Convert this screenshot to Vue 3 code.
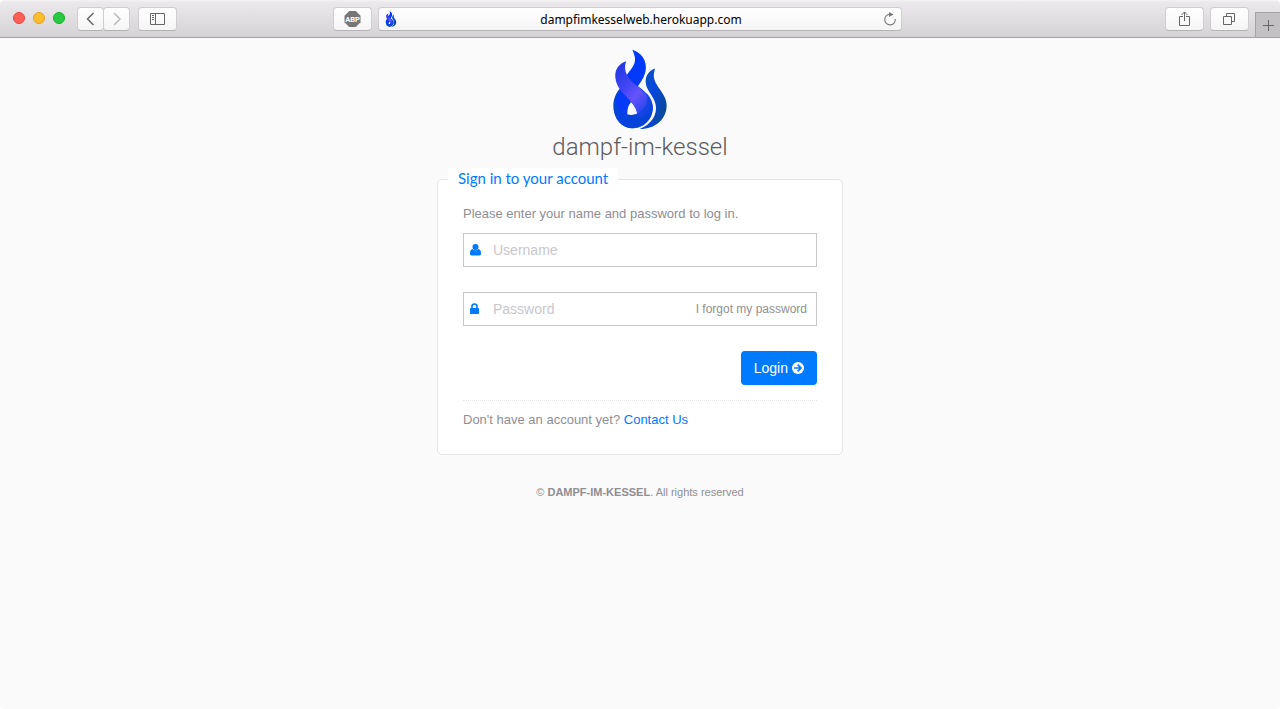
<script setup>
import { ref } from 'vue'

const username = ref('')
const password = ref('')
</script>

<template>
  <div class="window">
    <svg class="defs" width="0" height="0" aria-hidden="true">
      <defs>
        <linearGradient id="flameMain" x1="0" y1="0" x2="0.5" y2="1">
          <stop offset="0" stop-color="#0a3cf0" />
          <stop offset="0.4" stop-color="#0038fa" />
          <stop offset="1" stop-color="#0a3cf5" />
        </linearGradient>
        <linearGradient id="flameBase" x1="0" y1="0" x2="1" y2="0.4">
          <stop offset="0" stop-color="#0b50a8" />
          <stop offset="0.4" stop-color="#0440ee" />
          <stop offset="1" stop-color="#0743cc" />
        </linearGradient>
        <linearGradient id="flameBand" x1="0" y1="0" x2="0.75" y2="1">
          <stop offset="0" stop-color="#1a35df" />
          <stop offset="0.45" stop-color="#4546f5" />
          <stop offset="0.65" stop-color="#6654fa" />
          <stop offset="1" stop-color="#1743ee" />
        </linearGradient>
        <linearGradient id="flameSide" x1="0" y1="0" x2="1" y2="0.5">
          <stop offset="0" stop-color="#0a58a4" />
          <stop offset="0.55" stop-color="#0647e0" />
          <stop offset="1" stop-color="#08499c" />
        </linearGradient>
        <symbol id="flame" viewBox="36 21 168 246">
          <path fill="url(#flameBase)" fill-rule="evenodd" d="M72 128C52 145 38 168 39 195C41 235 65 262 98 262C132 261 158 235 159 202C159 180 146 160 128 145L106 128ZM93 182C105 195 112 207 112 217C101 223 90 222 81 219C80 205 84 193 93 182Z" />
          <path fill="url(#flameMain)" d="M97 23C122 31 138 51 138 77C138 105 117 128 106 145C94 163 81 185 81 219C61 211 48 196 45 179C48 155 68 140 73 116C77 94 104 80 105 53C105 40 99 30 97 23Z" />
          <path fill="url(#flameBand)" d="M78 58C57 64 43 83 45 107C48 139 69 156 88 176C105 194 114 213 111 230C137 229 157 218 159 202C159 171 133 153 109 132C87 114 66 89 78 58Z" />
          <path fill="#0644d9" fill-opacity="0.65" d="M40 199C58 225 90 227 113 216C134 206 148 183 140 155C153 168 161 186 158 207C152 241 127 263 98 262C64 262 41 234 40 199Z" />
          <path fill="url(#flameSide)" d="M166 80C144 87 134 107 138 128C142 149 160 162 167 187C175 219 154 250 119 264C164 265 200 235 201 194C202 157 166 137 162 106C161 95 164 87 166 80Z" />
        </symbol>
      </defs>
    </svg>

    <header class="toolbar">
      <div class="side">
        <div class="lights">
          <button class="light red" type="button" aria-label="Close"></button>
          <button class="light yellow" type="button" aria-label="Minimize"></button>
          <button class="light green" type="button" aria-label="Zoom"></button>
        </div>
        <div class="history">
          <button class="tool narrow" type="button" aria-label="Back">
            <svg width="10" height="14" viewBox="0 0 10 14"><path d="M7.500 1 1.500 7l6 6" fill="none" stroke="#666" stroke-width="1.5" /></svg>
          </button>
          <button class="tool narrow" type="button" aria-label="Forward">
            <svg width="10" height="14" viewBox="0 0 10 14"><path d="m2 1 6 6-6 6" fill="none" stroke="#bbb" stroke-width="1.5" /></svg>
          </button>
        </div>
        <button class="tool" type="button" aria-label="Show sidebar">
          <svg width="15" height="12" viewBox="0 0 15 12" fill="none" stroke="#666"><path d="M.5.5h14v11H.5zM5.5.5v11M2 2.5h2M2 4.5h2M2 6.5h2" /></svg>
        </button>
        <button class="tool blocker" type="button" aria-label="Ad blocker">
          <svg width="17" height="16" viewBox="0 0 17 16">
            <path d="M5.200 0h6.600L16.500 4.800v6.400L11.800 16H5.200L.5 11.200V4.800z" fill="#777" />
            <text x="8.500" y="10.600" text-anchor="middle" fill="#fff" font-size="7.500" font-weight="700" font-family="Roboto, sans-serif">ABP</text>
          </svg>
        </button>
      </div>

      <div class="address">
        <svg class="favicon" width="16" height="16" aria-hidden="true"><use href="#flame" /></svg>
        <input class="url" type="text" aria-label="Address" value="dampfimkesselweb.herokuapp.com" />
        <button class="reload" type="button" aria-label="Reload">
          <svg width="14" height="14" viewBox="0 0 14 14"><path d="M12.3 7A5.3 5.3 0 1 1 7.5 2.3" fill="none" stroke="#777" stroke-width="1.1" /><path d="M6 0v5l4.5-2.5z" fill="#777" /></svg>
        </button>
      </div>

      <div class="side right">
        <button class="tool" type="button" aria-label="Share">
          <svg width="11" height="16" viewBox="0 0 11 16" fill="none" stroke="#666"><path d="M4 5.500H.5v9h10v-9H7M5.500 10V1M2.500 4l3-3 3 3" /></svg>
        </button>
        <button class="tool" type="button" aria-label="Show tabs">
          <svg width="13" height="12" viewBox="0 0 13 12" fill="none" stroke="#666"><path d="M.5 3.500h8v8h-8zM3.500 3V.5h8v8H9" /></svg>
        </button>
        <button class="newtab" type="button" aria-label="New tab">
          <svg width="11" height="11" viewBox="0 0 11 11"><path d="M5.500 0v11M0 5.500h11" stroke="#666" /></svg>
        </button>
      </div>
    </header>

    <main class="page">
      <svg class="logo" width="56" height="81" role="img" aria-label="Flame"><use href="#flame" /></svg>
      <h1>dampf-im-kessel</h1>

      <form @submit.prevent>
        <fieldset>
          <legend>Sign in to your account</legend>
          <p>Please enter your name and password to log in.</p>
          <div class="field">
            <svg width="11" height="12" viewBox="0 0 11 12" fill="#007aff" aria-hidden="true"><circle cx="5.500" cy="3" r="3" /><path d="M2.600 5C.6 5.300 0 7.200 0 9.400 0 10.800.8 11.500 2 11.500h7c1.200 0 2-.7 2-2.100 0-2.200-.6-4.100-2.600-4.400a4 4 0 0 1-5.800 0Z" /></svg>
            <input v-model="username" type="text" placeholder="Username" aria-label="Username" />
          </div>
          <div class="field">
            <svg width="11" height="12" viewBox="0 0 11 12" aria-hidden="true"><path d="M2 6V3.500a2.500 2.500 0 0 1 5 0V6" fill="none" stroke="#007aff" stroke-width="1.600" /><rect y="5" width="9" height="6" rx=".8" fill="#007aff" /></svg>
            <input v-model="password" type="password" placeholder="Password" aria-label="Password" />
            <a class="forgot" href="#">I forgot my password</a>
          </div>
          <div class="actions">
            <button class="login" type="submit">
              Login
              <svg width="12" height="12" viewBox="0 0 12 12" aria-hidden="true"><circle cx="6" cy="6" r="6" fill="#fff" /><path d="M2 6h7M5.600 2.600 9 6 5.600 9.400" fill="none" stroke="#007aff" stroke-width="1.700" /></svg>
            </button>
          </div>
          <div class="account">Don't have an account yet? <a href="#">Contact Us</a></div>
        </fieldset>
      </form>

      <footer>© <b>DAMPF-IM-KESSEL</b>. All rights reserved</footer>
    </main>
  </div>
</template>

<style>
body {
  margin: 0;
  background: #fff;
}
</style>

<style scoped>
* {
  box-sizing: border-box;
}
.window {
  min-height: 100vh;
  background: #fafafa;
  border-radius: 5px;
  overflow: hidden;
  font-family: "Liberation Sans", Arial, sans-serif;
  color: #8e8e93;
}
.defs {
  position: absolute;
}
button,
input {
  font-family: inherit;
  margin: 0;
}
button {
  padding: 0;
  border: 0;
  display: flex;
  align-items: center;
  justify-content: center;
}
svg {
  display: block;
  flex: none;
}
.toolbar {
  display: grid;
  grid-template-columns: 1fr 41% 1fr;
  height: 38px;
  border-bottom: 1px solid #a4a2a4;
  background: linear-gradient(#f5f4f5 0, #ebe9eb 2px, #d4d2d4);
}
.side {
  display: flex;
  align-items: center;
  padding-left: 13px;
  padding-right: 6px;
}
.lights {
  display: flex;
  gap: 8px;
  margin-right: 12px;
  padding-bottom: 2px;
}
.light {
  width: 12px;
  height: 12px;
  border-radius: 50%;
  border: 1px solid;
}
.red { background: #ff5f57; border-color: #e2463f; }
.yellow { background: #ffbd2e; border-color: #e1a116; }
.green { background: #28ca41; border-color: #14ae24; }
.history {
  display: flex;
  margin-right: 8px;
}
.tool {
  width: 39px;
  height: 24px;
  border: 1px solid #cfcdcf;
  border-bottom-color: #b5b3b5;
  border-radius: 4px;
  background: linear-gradient(#fff, #f5f5f5);
}
.narrow {
  width: 27px;
}
.narrow + .narrow {
  margin-left: -1px;
}
.blocker {
  margin-left: auto;
}
.address {
  align-self: center;
  display: flex;
  align-items: center;
  height: 24px;
  padding: 0 4px;
  border: 1px solid #cfcdcf;
  border-bottom-color: #b5b3b5;
  border-radius: 4px;
  background: linear-gradient(#fff, #f5f5f5);
}
.url {
  flex: 1;
  min-width: 0;
  border: 0;
  padding: 2px 0 0;
  background: none;
  text-align: center;
  font-family: "Noto Sans", "Liberation Sans", sans-serif;
  font-size: 12px;
  color: #000;
}
.reload {
  background: none;
}
.right {
  justify-content: flex-end;
  gap: 6px;
  padding: 0;
}
.newtab {
  align-self: flex-end;
  width: 25px;
  height: 25px;
  border: 1px solid #a4a2a4;
  border-width: 1px 0 0 1px;
  background: #c3c1c3;
}
.page {
  display: flex;
  flex-direction: column;
  align-items: center;
  padding: 11px 16px 24px;
}
h1 {
  margin: 2px 0 0;
  font-family: Roboto, "Liberation Sans", sans-serif;
  font-size: 24px;
  font-weight: 300;
  line-height: 30px;
  color: #5b5b60;
}
form {
  width: 100%;
  max-width: 406px;
  margin-top: 6px;
}
fieldset {
  margin: 0;
  min-width: 0;
  padding: 13px 25px 23px;
  border: 1px solid #e5e5e7;
  border-radius: 5px;
  background: #fff;
}
legend {
  margin-left: -15px;
  padding: 0 10px 2px;
  background: #fff;
  font-family: Lato, sans-serif;
  font-size: 15px;
  line-height: 20px;
  color: #007aff;
}
p {
  margin: 0 0 8px;
  font-size: 13px;
  line-height: 22px;
}
.field {
  display: flex;
  align-items: center;
  gap: 12px;
  height: 34px;
  margin-bottom: 25px;
  padding: 0 9px 0 6px;
  border: 1px solid #c7c7cc;
  background: #fff;
}
.field input {
  flex: 1;
  min-width: 0;
  border: 0;
  padding: 0;
  outline: 0;
  background: none;
  font-size: 14px;
  color: #5b5b60;
}
.field input::placeholder {
  color: #c7c7cc;
  opacity: 1;
}
a {
  color: #007aff;
  text-decoration: none;
}
.field .forgot {
  font-size: 12px;
  color: #909090;
}
.actions {
  display: flex;
  justify-content: flex-end;
}
.login {
  gap: 4px;
  height: 34px;
  padding: 0 13px;
  border-radius: 4px;
  background: #007aff;
  color: #fff;
  font-size: 14px;
}
.account {
  margin-top: 15px;
  padding-top: 8px;
  border-top: 1px dotted #e5e5e7;
  font-size: 13px;
  line-height: 22px;
}
footer {
  margin-top: 27px;
  font-size: 11px;
  line-height: 20px;
}
</style>
